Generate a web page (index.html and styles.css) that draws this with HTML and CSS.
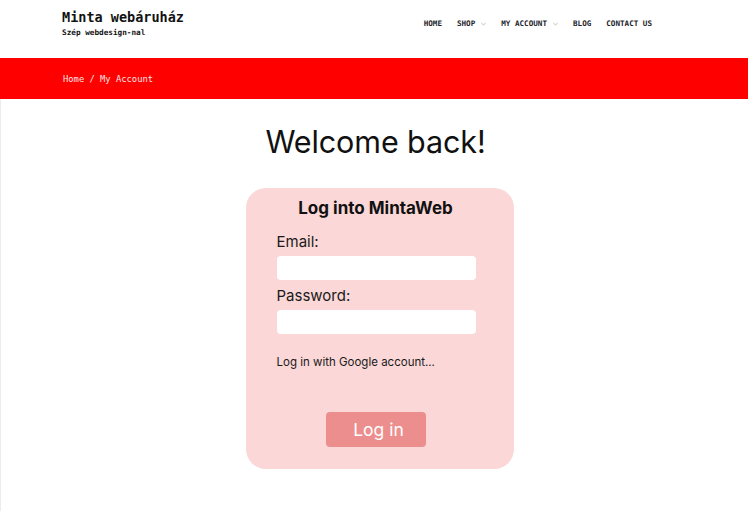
FILE: index.html
```html
<!DOCTYPE html>
<html lang="hu">
<head>
<meta charset="utf-8">
<title>Minta webáruház</title>
<link rel="stylesheet" href="styles.css">
</head>
<body>
<header class="site-header">
  <div class="brand">
    <div class="brand-title">Minta webáruház</div>
    <div class="brand-sub">Szép webdesign-nal</div>
  </div>
  <nav class="main-nav">
    <a class="nav-item">HOME</a>
    <a class="nav-item">SHOP<svg class="chev" viewBox="0 0 6 4" width="5" height="4"><path d="M0.5 0.8 L3 3.2 L5.5 0.8" fill="none" stroke="#9a9a9a" stroke-width="0.8"/></svg></a>
    <a class="nav-item">MY ACCOUNT<svg class="chev" viewBox="0 0 6 4" width="5" height="4"><path d="M0.5 0.8 L3 3.2 L5.5 0.8" fill="none" stroke="#9a9a9a" stroke-width="0.8"/></svg></a>
    <a class="nav-item">BLOG</a>
    <a class="nav-item">CONTACT US</a>
  </nav>
</header>
<div class="crumbs">Home / My Account</div>
<main class="content">
  <h1 class="welcome">Welcome back!</h1>
  <form class="login-card">
    <h2 class="card-title">Log into MintaWeb</h2>
    <label class="field-label">Email:</label>
    <input class="field-input" type="text">
    <label class="field-label second">Password:</label>
    <input class="field-input" type="password">
    <div class="google">Log in with Google account...</div>
    <div class="btn-row"><button type="button" class="login-btn">Log in</button></div>
  </form>
</main>
</body>
</html>
```
FILE: styles.css
```css
html, body {
  margin: 0;
  padding: 0;
  background: #fff;
}
body {
  font-family: Inter, "Noto Sans", sans-serif;
  color: #111;
}
.site-header {
  height: 58px;
  display: flex;
  align-items: flex-start;
  padding: 0 98px 0 62px;
  box-sizing: border-box;
}
.brand {
  padding-top: 9px;
  font-family: "DejaVu Sans Mono", monospace;
  font-weight: bold;
  color: #111;
}
.brand-title {
  font-size: 13.5px;
  line-height: 16px;
}
.brand-sub {
  font-size: 7.7px;
  line-height: 10px;
  margin-top: 3px;
}
.main-nav {
  margin-left: auto;
  display: flex;
  gap: 15px;
  padding-top: 19px;
  font-family: "DejaVu Sans Mono", monospace;
  font-weight: bold;
  font-size: 7.6px;
  line-height: 10px;
  color: #1c1c2a;
}
.nav-item {
  display: flex;
  align-items: center;
  white-space: nowrap;
}
.chev {
  margin-left: 6px;
}
.crumbs {
  background: #ff0000;
  height: 41px;
  width: 748px;
  box-sizing: border-box;
  padding: 0 63px;
  display: flex;
  align-items: center;
  font-family: "DejaVu Sans Mono", monospace;
  font-size: 8.8px;
  color: #ffe4e4;
}
.content {
  border-left: 1px solid #ececec;
  min-height: 412px;
  box-sizing: border-box;
  display: flex;
  flex-direction: column;
  align-items: center;
}
.welcome {
  margin: 23px 0 26px;
  font-weight: 400;
  font-size: 30.5px;
  letter-spacing: -0.1px;
  line-height: 40px;
  color: #111;
}
.login-card {
  width: 268px;
  box-sizing: border-box;
  background: #fbd7d7;
  border-radius: 20px;
  padding: 8px 31px 22px;
  display: flex;
  flex-direction: column;
  margin-left: 8px;
}
.card-title {
  margin: 0 8px 12px 0;
  text-align: center;
  font-size: 17px;
  line-height: 24px;
  font-weight: 700;
  color: #111;
}
.field-label {
  font-size: 15px;
  line-height: 20px;
  margin-bottom: 4px;
  color: #1a1a1a;
}
.field-label.second {
  margin-top: 6px;
}
.field-input {
  width: 199px;
  height: 24px;
  box-sizing: border-box;
  border: none;
  border-radius: 4px;
  background: #fff;
  margin: 0;
}
.google {
  margin-top: 20px;
  font-size: 11.5px;
  line-height: 16px;
  color: #1a1a1a;
}
.btn-row {
  display: flex;
  justify-content: center;
  margin-top: 42px;
  padding-right: 8px;
}
.login-btn {
  width: 100px;
  height: 35px;
  border: none;
  border-radius: 4px;
  background: #ec8e8e;
  color: #fff;
  font-family: Inter, "Noto Sans", sans-serif;
  font-size: 17.5px;
  padding: 0 0 0 6px;
}
```
